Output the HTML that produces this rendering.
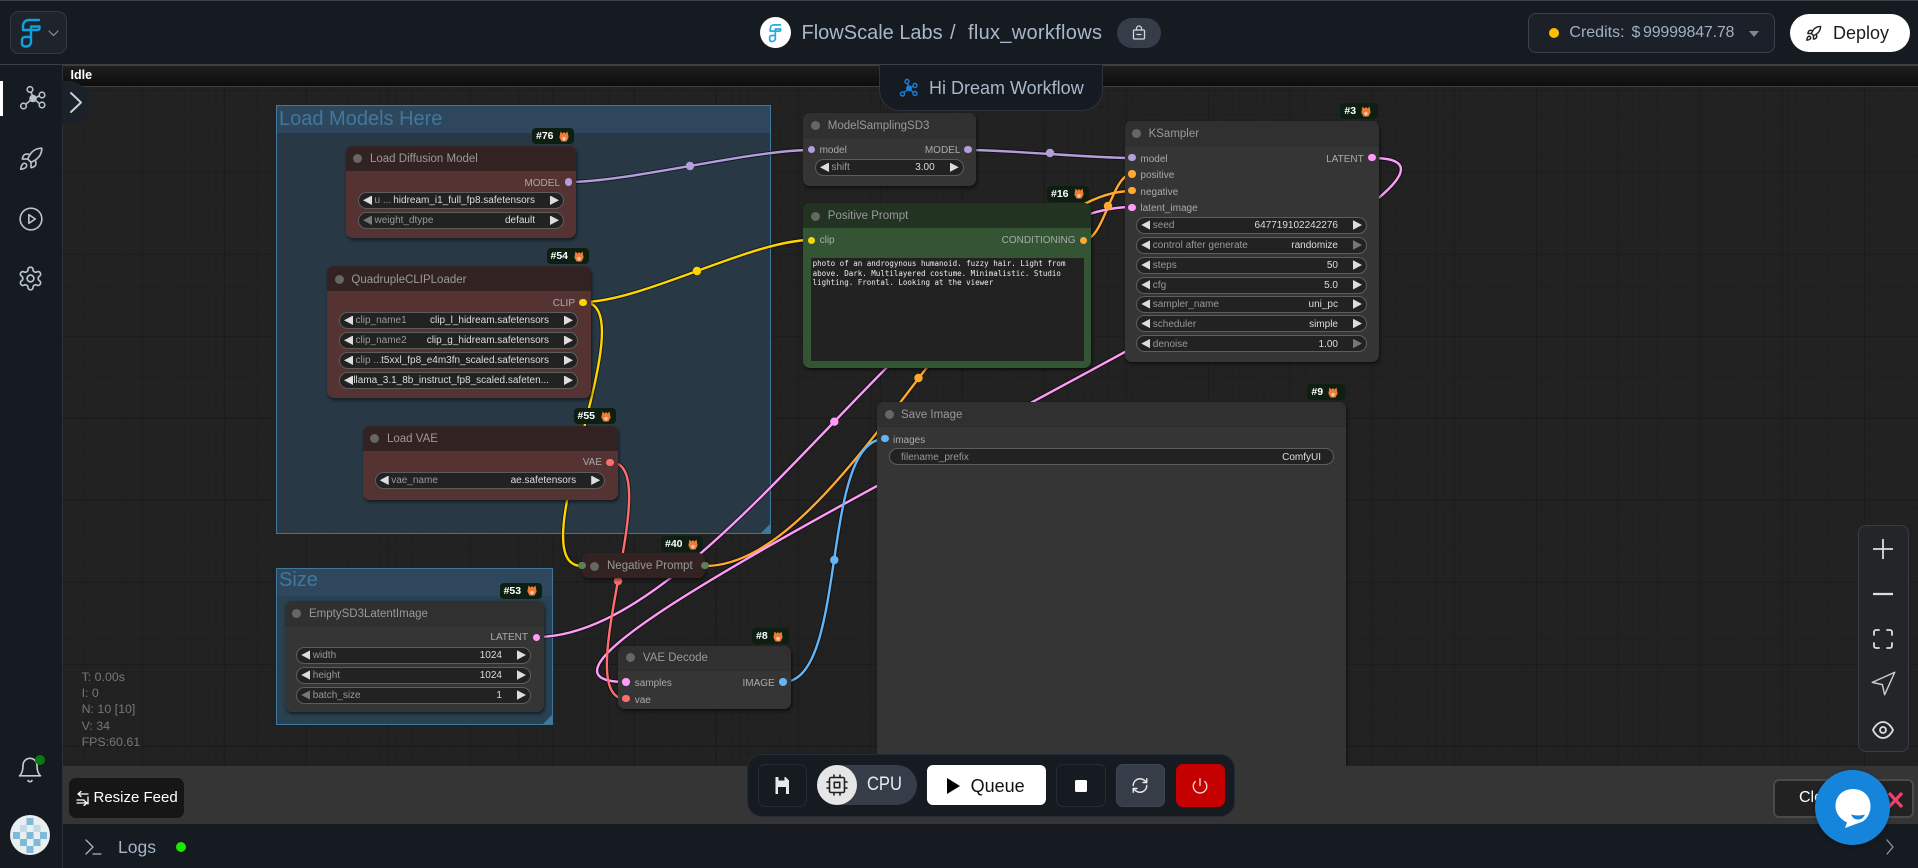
<!DOCTYPE html>
<html><head><meta charset="utf-8"><title>FlowScale</title>
<style>
*{box-sizing:border-box}
html,body{margin:0;padding:0;width:1918px;height:868px;overflow:hidden;background:#161a21;font-family:"Liberation Sans",sans-serif}
div,span,svg{position:absolute}
.t{white-space:nowrap;line-height:16px;height:16px}
.canvas{left:63px;top:86px;width:1855px;height:680px;background-color:#222;
background-image:linear-gradient(#1c1c1c 1px,transparent 1px),linear-gradient(90deg,#1c1c1c 1px,transparent 1px),linear-gradient(#1f1f1f 1px,transparent 1px),linear-gradient(90deg,#1f1f1f 1px,transparent 1px);
background-size:82px 82px,82px 82px,8.2px 8.2px,8.2px 8.2px;background-position:0 4px,-3px 0,0 4px,-3px 0}
.g{border:1.5px solid #3f789e;background:#283945}
.gb{left:0;top:0;right:0;background:#2f475c}
.gt{color:#3f789e;font-size:20px;line-height:24px;white-space:nowrap;left:2px;top:1px}
.n{border-radius:7px;background:#353535;box-shadow:1px 2px 3px rgba(0,0,0,.55)}
.nt{left:0;top:0;right:0;height:25px;background:#303030;border-radius:7px 7px 0 0;border-bottom:1px solid #2d2d2d}
.r{background:#553333}.r .nt{background:#332222;border-bottom:0}
.gr{background:#335533}.gr .nt{background:#223322;border-bottom:0}
.tt{color:#999;font-size:11.5px;white-space:nowrap;line-height:16px;height:16px}
.dot{width:9px;height:9px;border-radius:50%;background:#666;margin:-4.5px 0 0 -4.5px}
.d{width:7.5px;height:7.5px;border-radius:50%;margin:-3.75px 0 0 -3.75px}
.s{color:#aaa;font-size:10px;white-space:nowrap;line-height:14px;height:14px;margin-top:-6px}
.w{height:17px;border:1.3px solid #5d5d5d;background:#222;border-radius:9px}
.w b{position:absolute;left:15.5px;top:1.4px;line-height:14.5px;font-weight:400;font-size:10px;color:#999;white-space:nowrap}
.w u{position:absolute;right:28px;top:1.4px;line-height:14.5px;text-decoration:none;font-size:10px;color:#ddd;white-space:nowrap}
.al,.ar{position:absolute;top:2.5px;width:9px;height:9.5px;background:#ddd}
.al{left:4px;clip-path:polygon(0 50%,100% 0,100% 100%)}
.ar{right:4px;clip-path:polygon(0 0,100% 50%,0 100%)}
.off{background:#777}
.b{height:16px;background:#0d1f10;border-radius:4px;color:#fff;font-size:10.5px;font-weight:700;line-height:16px;white-space:nowrap}
.b span{left:4px;top:0}
.b svg{top:2.5px;width:10px;height:11px}
.btn{border-radius:7px;border:1px solid #262c36;background:#161a21;height:43px;top:764px}
.ic{fill:none;stroke-linecap:round;stroke-linejoin:round}
</style></head><body>
<svg width="0" height="0" style="position:absolute"><defs>
<symbol id="fox" viewBox="0 0 10 11"><path d="M1.500 0.500 L3.500 2.500 L5 1 L6.500 2.500 L8.500 0.500 L9.600 6.500 L7.500 10.500 H2.500 L0.400 6.500Z" fill="#ef7a35"/><path d="M2.800 7 L5 10.500 L7.200 7 L5 5.800Z" fill="#f6c8a8"/></symbol>
</defs></svg>

<div class="canvas"></div>

<!-- groups -->
<div class="g" style="left:276px;top:105px;width:495px;height:429px"><div class="gb" style="height:27px"></div><div class="gt">Load Models Here</div>
<svg style="right:0;bottom:0" width="9" height="9"><polygon points="9,0 9,9 0,9" fill="#3f789e"/></svg></div>
<div class="g" style="left:276px;top:568px;width:277px;height:157px;background:#2a4152"><div class="gb" style="height:27px"></div><div class="gt" style="top:-1px">Size</div>
<svg style="right:0;bottom:0" width="9" height="9"><polygon points="9,0 9,9 0,9" fill="#3f789e"/></svg></div>

<!-- wires -->
<svg style="left:0;top:0" width="1918" height="868" fill="none">
<g stroke="#000" stroke-opacity=".55" stroke-width="4.2">
<path d="M568.6 182C629 182 751 150 811 150"/><path d="M968 150C1009 150 1091 158 1132 158"/><path d="M583 302C642 302 752 240 811 240"/><path d="M583 302C649 302 516 566 582 566"/><path d="M1084 240C1104 240 1112 174 1132 174"/><path d="M705 566C847 566 990 191 1132 191"/><path d="M1372 158C1600 158 398 682 626 682"/><path d="M536 637C720 637 948 207 1132 207"/><path d="M783 682C849 682 819 439 885 439"/><path d="M610 462C669 462 567 699 626 699"/>
</g>
<g stroke-width="2.4">
<path stroke="#b39ddb" d="M568.6 182C629 182 751 150 811 150"/><path stroke="#b39ddb" d="M968 150C1009 150 1091 158 1132 158"/>
<path stroke="#ffd500" d="M583 302C642 302 752 240 811 240"/><path stroke="#ffd500" d="M583 302C649 302 516 566 582 566"/>
<path stroke="#ffa931" d="M1084 240C1104 240 1112 174 1132 174"/><path stroke="#ffa931" d="M705 566C847 566 990 191 1132 191"/>
<path stroke="#ff9cf9" d="M1372 158C1600 158 398 682 626 682"/><path stroke="#ff9cf9" d="M536 637C720 637 948 207 1132 207"/>
<path stroke="#64b5f6" d="M783 682C849 682 819 439 885 439"/><path stroke="#ff6e6e" d="M610 462C669 462 567 699 626 699"/>
</g>
<circle cx="690" cy="166" r="4.2" fill="#b39ddb"/><circle cx="1050" cy="153" r="4.2" fill="#b39ddb"/><circle cx="697" cy="271" r="4.2" fill="#ffd500"/><circle cx="1108" cy="206" r="4.2" fill="#ffa931"/><circle cx="918.5" cy="378" r="4.2" fill="#ffa931"/><circle cx="834.3" cy="421.7" r="4.2" fill="#ff9cf9"/><circle cx="834.3" cy="560" r="4.2" fill="#64b5f6"/><circle cx="618" cy="581" r="4.2" fill="#ff6e6e"/>
</svg>

<!-- Load Diffusion Model -->
<div class="n r" style="left:346px;top:146px;width:230px;height:92px"><div class="nt"></div></div>
<div class="dot" style="left:357.5px;top:158px"></div><div class="tt" style="left:370px;top:151px">Load Diffusion Model</div>
<div class="s" style="right:1358px;top:183px">MODEL</div><div class="d" style="left:568.6px;top:182px;background:#b39ddb"></div>
<div class="w" style="left:358px;top:192px;width:206px"><i class="al"></i><b>u ...</b><u>hidream_i1_full_fp8.safetensors</u><i class="ar"></i></div>
<div class="w" style="left:358px;top:212px;width:206px"><i class="al off"></i><b>weight_dtype</b><u>default</u><i class="ar"></i></div>
<div class="b" style="left:532px;top:128px;width:42px"><span>#76</span><svg style="left:27px"><use href="#fox"/></svg></div>

<!-- QuadrupleCLIPLoader -->
<div class="n r" style="left:327px;top:266px;width:264px;height:132px"><div class="nt"></div></div>
<div class="dot" style="left:339px;top:279px"></div><div class="tt" style="left:351.4px;top:272px">QuadrupleCLIPLoader</div>
<div class="s" style="right:1343px;top:303.3px">CLIP</div><div class="d" style="left:583px;top:302.3px;background:#ffd500"></div>
<div class="w" style="left:339px;top:312px;width:239px"><i class="al"></i><b>clip_name1</b><u>clip_l_hidream.safetensors</u><i class="ar"></i></div>
<div class="w" style="left:339px;top:332px;width:239px"><i class="al"></i><b>clip_name2</b><u>clip_g_hidream.safetensors</u><i class="ar"></i></div>
<div class="w" style="left:339px;top:352px;width:239px"><i class="al"></i><b>clip ...</b><u>t5xxl_fp8_e4m3fn_scaled.safetensors</u><i class="ar"></i></div>
<div class="w" style="left:339px;top:372px;width:239px"><i class="al"></i><u>llama_3.1_8b_instruct_fp8_scaled.safeten...</u><i class="ar"></i></div>
<div class="b" style="left:546.5px;top:248px;width:42px"><span>#54</span><svg style="left:27px"><use href="#fox"/></svg></div>

<!-- Load VAE -->
<div class="n r" style="left:362.5px;top:426px;width:255px;height:74px"><div class="nt"></div></div>
<div class="dot" style="left:374px;top:438px"></div><div class="tt" style="left:387px;top:431px">Load VAE</div>
<div class="s" style="right:1316px;top:462.3px">VAE</div><div class="d" style="left:610px;top:462.3px;background:#ff6e6e"></div>
<div class="w" style="left:374.7px;top:472px;width:230.5px"><i class="al"></i><b>vae_name</b><u>ae.safetensors</u><i class="ar"></i></div>
<div class="b" style="left:573.5px;top:408px;width:42px"><span>#55</span><svg style="left:27px"><use href="#fox"/></svg></div>

<!-- Negative Prompt -->
<div class="n" style="left:582px;top:553px;width:123px;height:25px;background:#332222"></div>
<div class="d" style="left:582px;top:565.7px;background:#5f7f58"></div><div class="dot" style="left:594px;top:566px"></div>
<div class="tt" style="left:607px;top:558px">Negative Prompt</div><div class="d" style="left:705px;top:565.7px;background:#5f7f58"></div>
<div class="b" style="left:661px;top:536px;width:42px"><span>#40</span><svg style="left:27px"><use href="#fox"/></svg></div>

<!-- Empty latent -->
<div class="n" style="left:284.5px;top:601px;width:259px;height:111px"><div class="nt"></div></div>
<div class="dot" style="left:296px;top:613px"></div><div class="tt" style="left:309px;top:606px">EmptySD3LatentImage</div>
<div class="s" style="right:1390px;top:637.3px">LATENT</div><div class="d" style="left:536.3px;top:637.3px;background:#ff9cf9"></div>
<div class="w" style="left:296.3px;top:646.7px;width:234.7px"><i class="al"></i><b>width</b><u>1024</u><i class="ar"></i></div>
<div class="w" style="left:296.3px;top:666.7px;width:234.7px"><i class="al"></i><b>height</b><u>1024</u><i class="ar"></i></div>
<div class="w" style="left:296.3px;top:686.7px;width:234.7px"><i class="al off"></i><b>batch_size</b><u>1</u><i class="ar"></i></div>
<div class="b" style="left:499.6px;top:582.7px;width:42px"><span>#53</span><svg style="left:27px"><use href="#fox"/></svg></div>

<!-- ModelSamplingSD3 -->
<div class="n" style="left:803px;top:113px;width:172.5px;height:72.5px"><div class="nt"></div></div>
<div class="dot" style="left:815.5px;top:125.7px"></div><div class="tt" style="left:827.8px;top:117.7px">ModelSamplingSD3</div>
<div class="d" style="left:811.4px;top:149.7px;background:#b39ddb"></div><div class="s" style="left:819.6px;top:149.7px">model</div>
<div class="s" style="right:957.6px;top:149.7px">MODEL</div><div class="d" style="left:968px;top:149.7px;background:#b39ddb"></div>
<div class="w" style="left:815px;top:159px;width:148.7px"><i class="al"></i><b>shift</b><u>3.00</u><i class="ar"></i></div>

<!-- Positive Prompt -->
<div class="n gr" style="left:803px;top:203.3px;width:288px;height:165px"><div class="nt"></div></div>
<div class="dot" style="left:815.5px;top:216px"></div><div class="tt" style="left:827.8px;top:208px">Positive Prompt</div>
<div class="d" style="left:811.4px;top:240.3px;background:#ffd500"></div><div class="s" style="left:819.6px;top:240.3px">clip</div>
<div class="s" style="right:842.5px;top:240.3px">CONDITIONING</div><div class="d" style="left:1083.7px;top:240.3px;background:#ffa931"></div>
<div style="left:811px;top:258px;width:273px;height:103.3px;background:#222;color:#eee;font:7.5px/9.5px 'DejaVu Sans Mono','Liberation Mono',monospace;padding:1px 1.6px">photo of an androgynous humanoid. fuzzy hair. Light from<br>above. Dark. Multilayered costume. Minimalistic. Studio<br>lighting. Frontal. Looking at the viewer</div>
<div class="b" style="left:1047px;top:185.7px;width:42px"><span>#16</span><svg style="left:27px"><use href="#fox"/></svg></div>

<!-- KSampler -->
<div class="n" style="left:1124.5px;top:121px;width:254.5px;height:240.7px"><div class="nt"></div></div>
<div class="dot" style="left:1136px;top:133.7px"></div><div class="tt" style="left:1148.6px;top:125.7px">KSampler</div>
<div class="d" style="left:1132px;top:157.7px;background:#b39ddb"></div><div class="s" style="left:1140.4px;top:158.7px">model</div>
<div class="d" style="left:1132px;top:174px;background:#ffa931"></div><div class="s" style="left:1140.4px;top:175px">positive</div>
<div class="d" style="left:1132px;top:190.7px;background:#ffa931"></div><div class="s" style="left:1140.4px;top:191.7px">negative</div>
<div class="d" style="left:1132px;top:207.3px;background:#ff9cf9"></div><div class="s" style="left:1140.4px;top:208.3px">latent_image</div>
<div class="s" style="right:554.3px;top:158.7px">LATENT</div><div class="d" style="left:1372px;top:157.7px;background:#ff9cf9"></div>
<div class="w" style="left:1136.3px;top:216.7px;width:230.7px"><i class="al"></i><b>seed</b><u>647719102242276</u><i class="ar"></i></div>
<div class="w" style="left:1136.3px;top:236.7px;width:230.7px"><i class="al"></i><b>control after generate</b><u>randomize</u><i class="ar off"></i></div>
<div class="w" style="left:1136.3px;top:256.7px;width:230.7px"><i class="al"></i><b>steps</b><u>50</u><i class="ar"></i></div>
<div class="w" style="left:1136.3px;top:276.5px;width:230.7px"><i class="al"></i><b>cfg</b><u>5.0</u><i class="ar"></i></div>
<div class="w" style="left:1136.3px;top:295.7px;width:230.7px"><i class="al"></i><b>sampler_name</b><u>uni_pc</u><i class="ar"></i></div>
<div class="w" style="left:1136.3px;top:315.3px;width:230.7px"><i class="al"></i><b>scheduler</b><u>simple</u><i class="ar"></i></div>
<div class="w" style="left:1136.3px;top:335.3px;width:230.7px"><i class="al"></i><b>denoise</b><u>1.00</u><i class="ar off"></i></div>
<div class="b" style="left:1340.4px;top:103px;width:37.2px"><span>#3</span><svg style="left:21px"><use href="#fox"/></svg></div>

<!-- Save Image -->
<div class="n" style="left:877px;top:402.3px;width:469px;height:380px"><div class="nt"></div></div>
<div class="dot" style="left:889px;top:414.7px"></div><div class="tt" style="left:901px;top:406.7px">Save Image</div>
<div class="d" style="left:885px;top:438.7px;background:#64b5f6"></div><div class="s" style="left:893px;top:440px">images</div>
<div class="w" style="left:889px;top:448.3px;width:445px"><b style="left:11px">filename_prefix</b><u style="right:12px">ComfyUI</u></div>
<div class="b" style="left:1307.4px;top:384.3px;width:37.2px"><span>#9</span><svg style="left:21px"><use href="#fox"/></svg></div>

<!-- VAE Decode -->
<div class="n" style="left:618px;top:645.7px;width:172.6px;height:63px"><div class="nt"></div></div>
<div class="dot" style="left:630px;top:657.3px"></div><div class="tt" style="left:642.9px;top:650.3px">VAE Decode</div>
<div class="d" style="left:626px;top:682px;background:#ff9cf9"></div><div class="s" style="left:634.7px;top:683px">samples</div>
<div class="d" style="left:626px;top:698.7px;background:#ff6e6e"></div><div class="s" style="left:634.7px;top:700px">vae</div>
<div class="s" style="right:1143.3px;top:682.5px">IMAGE</div><div class="d" style="left:783px;top:682px;background:#64b5f6"></div>
<div class="b" style="left:752px;top:628px;width:37.2px"><span>#8</span><svg style="left:21px"><use href="#fox"/></svg></div>

<!-- stats -->
<div style="left:81.6px;top:669px;color:#777;font-size:12.4px;line-height:16.2px;white-space:nowrap">T: 0.00s<br>I: 0<br>N: 10 [10]<br>V: 34<br>FPS:60.61</div>

<!-- idle bar -->
<div style="left:63px;top:65px;width:1855px;height:22px;background:linear-gradient(#1e1e1e,#0d0d0d);border-top:1px solid #3a3f46;border-bottom:1px solid #3f3f3f"></div>
<div class="t" style="left:70.5px;top:67px;color:#fff;font-size:12.5px;font-weight:700;line-height:16px">Idle</div>

<!-- bottom panel -->
<div style="left:63px;top:766px;width:1855px;height:58px;background:#353535"></div>
<div style="left:63px;top:824px;width:1855px;height:44px;background:#161a21"></div>

<div style="left:69px;top:778px;width:115px;height:40px;background:#161616;border-radius:7px"></div>
<svg class="ic" style="left:76px;top:790px" width="14" height="16" viewBox="0 0 14 16" stroke="#fff" stroke-width="1.3"><path d="M2 4h10M2 4l3-2.5M2 4l3 2.5M1 10h7M12 7v7M1 13h10M11 13l-3-2.5M11 13l-3 2.5"/></svg>
<div class="t" style="left:93.5px;top:790px;color:#fff;font-size:15px">Resize Feed</div>

<div style="left:1773px;top:778.5px;width:141px;height:39px;background:#222;border:2px solid #4a4a4a;border-radius:6px"></div>
<div class="t" style="left:1799px;top:790px;color:#fff;font-size:16px">Close</div>
<svg style="left:1886px;top:790px" width="19" height="20"><path d="M3 3L16 17M16 3L3 17" stroke="#f2406f" stroke-width="3.2" fill="none"/></svg>

<!-- toolbar -->
<div style="left:747px;top:753.7px;width:488px;height:63.5px;background:#161a21;border:1px solid #262c36;border-radius:15px"></div>
<div class="btn" style="left:757.5px;width:49.5px"></div>
<svg style="left:774px;top:776px" width="16" height="19" viewBox="0 0 16 19"><path d="M1.5 1h10L15 4.5V18H1.5Z" fill="#e8e8e8"/><rect x="4.5" y="1" width="6" height="3.5" fill="#161a21"/><rect x="4" y="11" width="8" height="7" fill="#161a21"/></svg>
<div style="left:817px;top:765px;width:100px;height:40px;background:#363d49;border-radius:20px"></div>
<div style="left:817px;top:765px;width:40px;height:40px;background:#e6e6e6;border-radius:50%"></div>
<svg class="ic" style="left:825px;top:773px" width="24" height="24" viewBox="0 0 24 24" stroke="#222" stroke-width="1.6"><rect x="4.5" y="4.5" width="15" height="15" rx="1.5"/><rect x="9.3" y="9.3" width="5.4" height="5.4"/><path d="M9 2v2.5M15 2v2.5M9 19.500v2.500M15 19.500v2.500M2 9h2.500M2 15h2.500M19.500 9h2.500M19.500 15h2.500"/></svg>
<div class="t" style="left:867px;top:775px;color:#e8ecf0;font-size:19px;height:20px;line-height:20px;transform:scaleX(.87);transform-origin:0 50%">CPU</div>
<div style="left:927.3px;top:765px;width:118.7px;height:40px;background:#fff;border-radius:6px"></div>
<svg style="left:947px;top:778px" width="13" height="16"><polygon points="0,0 13,8 0,16" fill="#000"/></svg>
<div class="t" style="left:970.6px;top:777px;color:#111;font-size:18px;height:18px;line-height:18px">Queue</div>
<div class="btn" style="left:1056px;width:49.7px"></div>
<div style="left:1075px;top:780px;width:12px;height:12px;background:#fff;border-radius:1.5px"></div>
<div class="btn" style="left:1116px;width:48.5px;background:#363d49;border-color:#3f4753"></div>
<svg class="ic" style="left:1131px;top:776px" width="18" height="19" viewBox="0 0 24 24" stroke="#e8e8e8" stroke-width="1.9"><path d="M3 12a9 9 0 0 1 9-9 9.750 9.750 0 0 1 6.740 2.740L21 8"/><path d="M21 3v5h-5"/><path d="M21 12a9 9 0 0 1-9 9 9.750 9.750 0 0 1-6.740-2.740L3 16"/><path d="M8 16H3v5"/></svg>
<div class="btn" style="left:1175.5px;width:49.5px;background:#c40000;border-color:#c40000"></div>
<svg class="ic" style="left:1191px;top:776px" width="18" height="19" viewBox="0 0 24 24" stroke="#f3d8d8" stroke-width="1.8"><path d="M12 3v9"/><path d="M18.400 6.600a9 9 0 1 1-12.770.040"/></svg>

<!-- zoom controls -->
<div style="left:1857.6px;top:525.3px;width:51px;height:227px;background:#232529;border:1px solid #3a3d42;border-radius:8px"></div>
<svg class="ic" style="left:1873px;top:539px" width="20" height="20" stroke="#ddd" stroke-width="1.8"><path d="M10 0v20M0 10h20"/></svg>
<svg class="ic" style="left:1873px;top:584px" width="20" height="20" stroke="#ddd" stroke-width="2.200"><path d="M0 10h20"/></svg>
<svg class="ic" style="left:1873px;top:629px" width="20" height="20" stroke="#ddd" stroke-width="1.8"><path d="M1 6V3a2 2 0 0 1 2-2h3M14 1h3a2 2 0 0 1 2 2v3M19 14v3a2 2 0 0 1-2 2h-3M6 19H3a2 2 0 0 1-2-2v-3"/></svg>
<svg class="ic" style="left:1870px;top:670px" width="27" height="27" viewBox="0 0 24 24" stroke="#ccc" stroke-width="1.300"><polygon points="2 11 22 2 13 22 11 13 2 11"/></svg>
<svg class="ic" style="left:1871px;top:718px" width="24" height="24" viewBox="0 0 24 24" stroke="#ddd" stroke-width="1.8"><path d="M2 12s3.500-8 10-8 10 8 10 8-3.500 8-10 8-10-8-10-8Z"/><circle cx="12" cy="12" r="3"/></svg>

<!-- log bar -->
<svg class="ic" style="left:84px;top:838px" width="18" height="18" stroke="#aab6c6" stroke-width="1.300"><path d="M2 2l7 7-7 7M9 16h8"/></svg>
<div class="t" style="left:118px;top:837px;color:#a5b5c8;font-size:17.500px;height:20px;line-height:20px">Logs</div>
<div style="left:176px;top:842px;width:10px;height:10px;border-radius:50%;background:#19e800"></div>
<svg class="ic" style="left:1885px;top:838px" width="10" height="18" stroke="#8a97a8" stroke-width="1.300"><path d="M2 2l6 7-6 7"/></svg>

<!-- chat -->
<div style="left:1815px;top:770px;width:75px;height:75px;border-radius:50%;background:#1585dc;box-shadow:0 1px 5px rgba(0,0,0,.3)"></div>
<svg style="left:1833px;top:787px" width="40" height="44" viewBox="0 0 40 44"><path d="M20 2C30 2 37.500 9 37.500 19C37.500 27 33 34 27 35.500L12 41L14 35.500C7 32 2.500 26 2.500 19C2.500 9 10 2 20 2Z" fill="#fff"/><path d="M18 27.500Q25 29.500 32 27.500Q30 32.500 25 32.500Q20 32.500 18 27.500Z" fill="#1585dc"/></svg>

<!-- header -->
<div style="left:0;top:0;width:1918px;height:65px;background:#161a21;border-top:1px solid #3f4349;border-bottom:1px solid #3a3f46"></div>
<div style="left:10px;top:11px;width:56.500px;height:43px;background:#1e232c;border:1px solid #333a45;border-radius:9px"></div>
<svg class="ic" style="left:18px;top:17px" width="25" height="32" viewBox="0 0 25 32" stroke="#0ea2dd" stroke-width="2.400"><path d="M21 3H11C7.500 3 5 5.500 5 9V13H19C21 13 21.500 12 21.500 11V9.500H13V25C13 27.500 11 29.500 8 29.500C5.500 29.500 4 28.500 4 26.500V23C4 21.500 5 20 7 20H13"/></svg>
<svg class="ic" style="left:48px;top:30px" width="11" height="7" stroke="#8b95a2" stroke-width="1.200"><path d="M1 1l4.500 4.500L10 1"/></svg>

<div style="left:759.500px;top:17px;width:31px;height:31px;background:#fff;border-radius:50%"></div>
<svg class="ic" style="left:767px;top:23px" width="16" height="20" viewBox="0 0 25 32" stroke="#29a9e0" stroke-width="2.800"><path d="M21 3H11C7.500 3 5 5.500 5 9V13H19C21 13 21.500 12 21.500 11V9.500H13V25C13 27.500 11 29.500 8 29.500C5.500 29.500 4 28.500 4 26.500V23C4 21.500 5 20 7 20H13"/></svg>
<div class="t" style="left:801.500px;top:21px;color:#a8b8c9;font-size:20px;height:24px;line-height:24px">FlowScale Labs</div>
<div class="t" style="left:950px;top:21px;color:#a8b8c9;font-size:20px;height:24px;line-height:24px">/</div>
<div class="t" style="left:968px;top:21px;color:#a8b8c9;font-size:20px;height:24px;line-height:24px;letter-spacing:.3px">flux_workflows</div>
<div style="left:1116.700px;top:18px;width:44.300px;height:30px;background:#363d49;border-radius:15px"></div>
<svg class="ic" style="left:1132px;top:25px" width="14" height="15" stroke="#d4d8de" stroke-width="1.300"><rect x="1.500" y="5" width="11" height="9" rx="1"/><path d="M4.500 5V3.500a2.500 2.500 0 0 1 5 0V5M5 9.500h4"/></svg>

<div style="left:1528px;top:13px;width:246.700px;height:40px;background:#1b2029;border:1px solid #3a424e;border-radius:8px"></div>
<div style="left:1548.800px;top:27.800px;width:10.400px;height:10.400px;background:#fdbf00;border-radius:50%"></div>
<div class="t" style="left:1569.400px;top:24px;color:#a0b0c2;font-size:16px;height:18px;line-height:18px">Credits:</div>
<div class="t" style="left:1631.500px;top:24px;color:#a0b0c2;font-size:16px;height:18px;line-height:18px">$</div>
<div class="t" style="left:1643px;top:24px;color:#a0b0c2;font-size:16px;height:18px;line-height:18px;letter-spacing:-.2px">99999847.78</div>
<svg style="left:1749px;top:31px" width="10" height="6"><polygon points="0,0 10,0 5,6" fill="#7d8896"/></svg>

<div style="left:1790px;top:14px;width:120px;height:37.700px;background:#fff;border-radius:19px"></div>
<svg class="ic" style="left:1805px;top:25px" width="17" height="17" viewBox="0 0 24 24" stroke="#222" stroke-width="2"><path d="M4.500 16.500c-1.500 1.260-2 5-2 5s3.740-.5 5-2c.710-.840.700-2.130-.090-2.910a2.180 2.180 0 0 0-2.910-.090z"/><path d="m12 15-3-3a22 22 0 0 1 2-3.950A12.880 12.880 0 0 1 22 2c0 2.720-.780 7.500-6 11a22.350 22.350 0 0 1-4 2z"/><path d="M9 12H4s.550-3.030 2-4c1.620-1.080 5 0 5 0"/><path d="M12 15v5s3.030-.550 4-2c1.080-1.620 0-5 0-5"/></svg>
<div class="t" style="left:1833px;top:22px;color:#1c1c1c;font-size:18px;height:22px;line-height:22px">Deploy</div>

<!-- workflow tab -->
<div style="left:879px;top:65px;width:224px;height:46px;background:#161a21;border:1px solid #2d333c;border-top:0;border-radius:0 0 21px 21px"></div>
<svg class="ic" style="left:899px;top:78px" width="20" height="20" viewBox="0 0 20 20" stroke="#1b7fd6" stroke-width="1.400"><circle cx="8" cy="3.500" r="2"/><circle cx="16" cy="7.500" r="2"/><circle cx="3.500" cy="16" r="2"/><circle cx="16" cy="15.500" r="2"/><path d="M8.500 5.500L10 9M14.200 8.200L10.500 10M5 14.500L9 11.500M14.500 14.500L11 11.500"/><circle cx="10" cy="10.300" r="2.300" fill="#1b7fd6"/></svg>
<div class="t" style="left:929px;top:77px;color:#a8b8c9;font-size:18px;height:22px;line-height:22px">Hi Dream Workflow</div>

<!-- sidebar -->
<div style="left:0;top:65px;width:63px;height:803px;background:#161a21;border-right:1px solid #2c3038"></div>
<div style="left:0;top:81px;width:3px;height:35px;background:#fff"></div>
<div style="left:62px;top:81px;width:28px;height:43px;background:#1b2128;border-radius:0 22px 22px 0"></div>
<svg class="ic" style="left:68px;top:91px" width="16" height="23" stroke="#cdd2d8" stroke-width="1.900"><path d="M3 2l10 9.500L3 21"/></svg>

<svg class="ic" style="left:19px;top:85px" width="28" height="26" viewBox="0 0 28 26" stroke="#b8c2cc" stroke-width="1.600"><circle cx="11" cy="4.500" r="2.800"/><circle cx="23" cy="10" r="2.800"/><circle cx="4.500" cy="21" r="2.800"/><circle cx="23" cy="20" r="2.800"/><path d="M12 7l2 5M20 11l-4 2M7 19l5-4M20.500 18.500L16 15"/><circle cx="14" cy="13.500" r="3" fill="#b8c2cc"/></svg>
<svg class="ic" style="left:18px;top:146px" width="26" height="26" viewBox="0 0 24 24" stroke="#b8c2cc" stroke-width="1.500"><path d="M4.500 16.500c-1.500 1.260-2 5-2 5s3.740-.5 5-2c.710-.840.700-2.130-.090-2.910a2.180 2.180 0 0 0-2.910-.090z"/><path d="m12 15-3-3a22 22 0 0 1 2-3.950A12.880 12.880 0 0 1 22 2c0 2.720-.780 7.500-6 11a22.350 22.350 0 0 1-4 2z"/><path d="M9 12H4s.550-3.030 2-4c1.620-1.080 5 0 5 0"/><path d="M12 15v5s3.030-.550 4-2c1.080-1.620 0-5 0-5"/></svg>
<svg class="ic" style="left:18px;top:206px" width="26" height="26" viewBox="0 0 24 24" stroke="#b8c2cc" stroke-width="1.500"><circle cx="12" cy="12" r="10"/><polygon points="10 8 16 12 10 16 10 8"/></svg>
<svg class="ic" style="left:17px;top:265px" width="27" height="27" viewBox="0 0 24 24" stroke="#b8c2cc" stroke-width="1.500"><path d="M12.220 2h-.44a2 2 0 0 0-2 2v.18a2 2 0 0 1-1 1.730l-.43.25a2 2 0 0 1-2 0l-.15-.08a2 2 0 0 0-2.730.73l-.22.38a2 2 0 0 0 .73 2.730l.15.1a2 2 0 0 1 1 1.720v.51a2 2 0 0 1-1 1.740l-.15.09a2 2 0 0 0-.73 2.730l.22.38a2 2 0 0 0 2.730.73l.15-.08a2 2 0 0 1 2 0l.43.25a2 2 0 0 1 1 1.730V20a2 2 0 0 0 2 2h.44a2 2 0 0 0 2-2v-.18a2 2 0 0 1 1-1.730l.43-.25a2 2 0 0 1 2 0l.15.08a2 2 0 0 0 2.730-.73l.22-.39a2 2 0 0 0-.73-2.730l-.15-.08a2 2 0 0 1-1-1.740v-.5a2 2 0 0 1 1-1.740l.15-.09a2 2 0 0 0 .73-2.730l-.22-.38a2 2 0 0 0-2.730-.73l-.15.08a2 2 0 0 1-2 0l-.43-.25a2 2 0 0 1-1-1.730V4a2 2 0 0 0-2-2z"/><circle cx="12" cy="12" r="3"/></svg>

<svg class="ic" style="left:16px;top:756px" width="28" height="28" viewBox="0 0 24 24" stroke="#c4ccd4" stroke-width="1.400"><path d="M6 8a6 6 0 0 1 12 0c0 7 3 9 3 9H3s3-2 3-9"/><path d="M10.300 21a1.940 1.940 0 0 0 3.400 0"/></svg>
<div style="left:34.600px;top:755px;width:10px;height:10px;border-radius:50%;background:#0b7a13"></div>

<svg style="left:10px;top:815px" width="40" height="40" viewBox="0 0 40 40"><defs><clipPath id="av"><circle cx="20" cy="20" r="20"/></clipPath></defs><g clip-path="url(#av)"><rect width="40" height="40" fill="#e9eef0"/><g fill="#7fb9d8"><rect x="16.500" y="3" width="7" height="7"/><rect x="3" y="17" width="7" height="7"/><rect x="16.500" y="17" width="7" height="7"/><rect x="30" y="17" width="7" height="7"/><rect x="10" y="24" width="7" height="7"/><rect x="23.500" y="24" width="7" height="7"/><rect x="16.500" y="31" width="7" height="7"/></g><g fill="#c3dbe8"><rect x="10" y="10" width="7" height="7"/><rect x="23.500" y="10" width="7" height="7"/></g></g></svg>
</body></html>
